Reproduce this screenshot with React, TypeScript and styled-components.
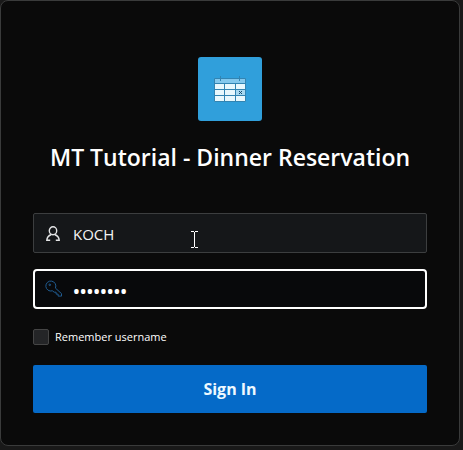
import React, { useState } from "react";
import styled, { createGlobalStyle } from "styled-components";

const GlobalStyle = createGlobalStyle`
  *, *::before, *::after { box-sizing: border-box; }
  body {
    margin: 0;
    background: #191919;
    color: #fff;
    font-family: "Segoe UI", "Open Sans", "Noto Sans", sans-serif;
  }
`;

const Page = styled.main`
  padding: 0 3px 4px 0;
`;

const Card = styled.form`
  display: flex;
  flex-direction: column;
  align-items: stretch;
  padding: 56px 32px 32px;
  background: #0a0a0a;
  border: 1px solid #3a3b3b;
  border-radius: 8px;
`;

const Header = styled.header`
  display: flex;
  flex-direction: column;
  align-items: center;
  gap: 20px;
  margin-bottom: 40px;
`;

const Logo = styled.span`
  display: flex;
  align-items: center;
  justify-content: center;
  width: 64px;
  height: 64px;
  border-radius: 3px;
  background: #309fdb;
`;

const Title = styled.h1`
  margin: 0;
  font-size: 23px;
  line-height: 32px;
  font-weight: 600;
  white-space: nowrap;
`;

const Field = styled.label<{ $active?: boolean }>`
  position: relative;
  display: flex;
  align-items: center;
  gap: 12px;
  height: 40px;
  margin-bottom: 16px;
  padding: 2px 11px 0;
  border: 1px solid #3c3e3f;
  border-radius: 2px;
  background: #151719;

  ${(p) => p.$active && `
    gap: 10px;
    padding: 0 10px;
    border: 2px solid #fff;
    border-radius: 4px;
    background: #08090b;
  `}

  > svg { flex: none; }
`;

const Input = styled.input`
  flex: 1;
  min-width: 0;
  padding: 0;
  border: 0;
  outline: 0;
  background: transparent;
  color: #f4f4f4;
  font-family: inherit;
  font-size: 15px;
  line-height: 24px;

  &[type="password"] {
    padding-top: 4px;
    color: #fff;
    font-size: 18px;
    font-weight: 600;
  }
`;

const Pointer = styled.span`
  position: absolute;
  left: 157px;
  top: 17px;
  display: flex;
  pointer-events: none;
`;

const Remember = styled.label`
  display: flex;
  align-items: center;
  align-self: flex-start;
  gap: 6px;
  height: 16px;
  margin: 4px 0 20px;
  font-size: 11px;
  line-height: 16px;
  font-weight: 500;
`;

const Checkbox = styled.input`
  appearance: none;
  width: 16px;
  height: 16px;
  margin: 0;
  border: 1px solid #454545;
  border-radius: 2px;
  background: #242527;

  &:checked { background: #056ac8; }
`;

const SubmitButton = styled.button`
  height: 48px;
  border: 0;
  border-radius: 2px;
  background: #056ac8;
  color: #eef9ff;
  font-family: inherit;
  font-size: 16px;
  line-height: 24px;
  font-weight: 700;
`;

function CalendarIcon() {
  return (
    <svg width="32" height="28" viewBox="0 0 32 28" aria-hidden="true">
      <rect x="0.5" y="3.5" width="31" height="5" fill="#83c8ed" />
      <rect x="0.5" y="8.5" width="31" height="18" fill="#e8f8fd" />
      <rect x="21" y="15" width="10" height="5" fill="#a7d9f1" />
      <path d="M.5 3.5h31v23H.5zM0 8.5h32M0 14.5h32M0 20.5h32M10.5 8v19M21.5 8v19M6.5 1v5M25.5 1v5" fill="none" stroke="#3284b2" />
      <path d="m25 16 3 3m0-3-3 3" stroke="#174d70" />
    </svg>
  );
}

function PersonIcon() {
  return (
    <svg width="16" height="16" viewBox="0 0 16 16" fill="none" stroke="#e3e4e5" strokeWidth="1.4" aria-hidden="true">
      <ellipse cx="8" cy="4.8" rx="3.7" ry="4" />
      <path d="M6.3 8.5C3.5 9.6 2 11.2 1.8 14.2h3.4M9.7 8.5c2.8 1.1 4.3 2.7 4.5 5.7h-3.4" />
    </svg>
  );
}

function KeyIcon() {
  return (
    <svg width="18" height="18" viewBox="0 0 18 18" fill="none" stroke="#205c91" aria-hidden="true">
      <path d="M10.4 8.1A5 5 0 1 0 7.4 10.8l1.8 1.4h1.9v1.9h2v2h3.4v-2.5Z" />
      <circle cx="4.8" cy="4.8" r=".8" />
    </svg>
  );
}

function TextPointer() {
  return (
    <svg width="7" height="17" viewBox="0 0 7 17" fill="none" stroke="#fff" aria-hidden="true">
      <path d="M0 .5h3M4 .5h3M3.5 1v15M0 16.5h3M4 16.5h3" />
    </svg>
  );
}

export default function App() {
  const [username, setUsername] = useState("KOCH");
  const [password, setPassword] = useState("password");

  return (
    <>
      <GlobalStyle />
      <Page>
        <Card onSubmit={(e) => e.preventDefault()}>
          <Header>
            <Logo><CalendarIcon /></Logo>
            <Title>MT Tutorial - Dinner Reservation</Title>
          </Header>
          <Field>
            <PersonIcon />
            <Input aria-label="Username" value={username} onChange={(e) => setUsername(e.target.value)} />
            <Pointer><TextPointer /></Pointer>
          </Field>
          <Field $active>
            <KeyIcon />
            <Input type="password" aria-label="Password" value={password} onChange={(e) => setPassword(e.target.value)} />
          </Field>
          <Remember>
            <Checkbox type="checkbox" />
            Remember username
          </Remember>
          <SubmitButton type="submit">Sign In</SubmitButton>
        </Card>
      </Page>
    </>
  );
}
